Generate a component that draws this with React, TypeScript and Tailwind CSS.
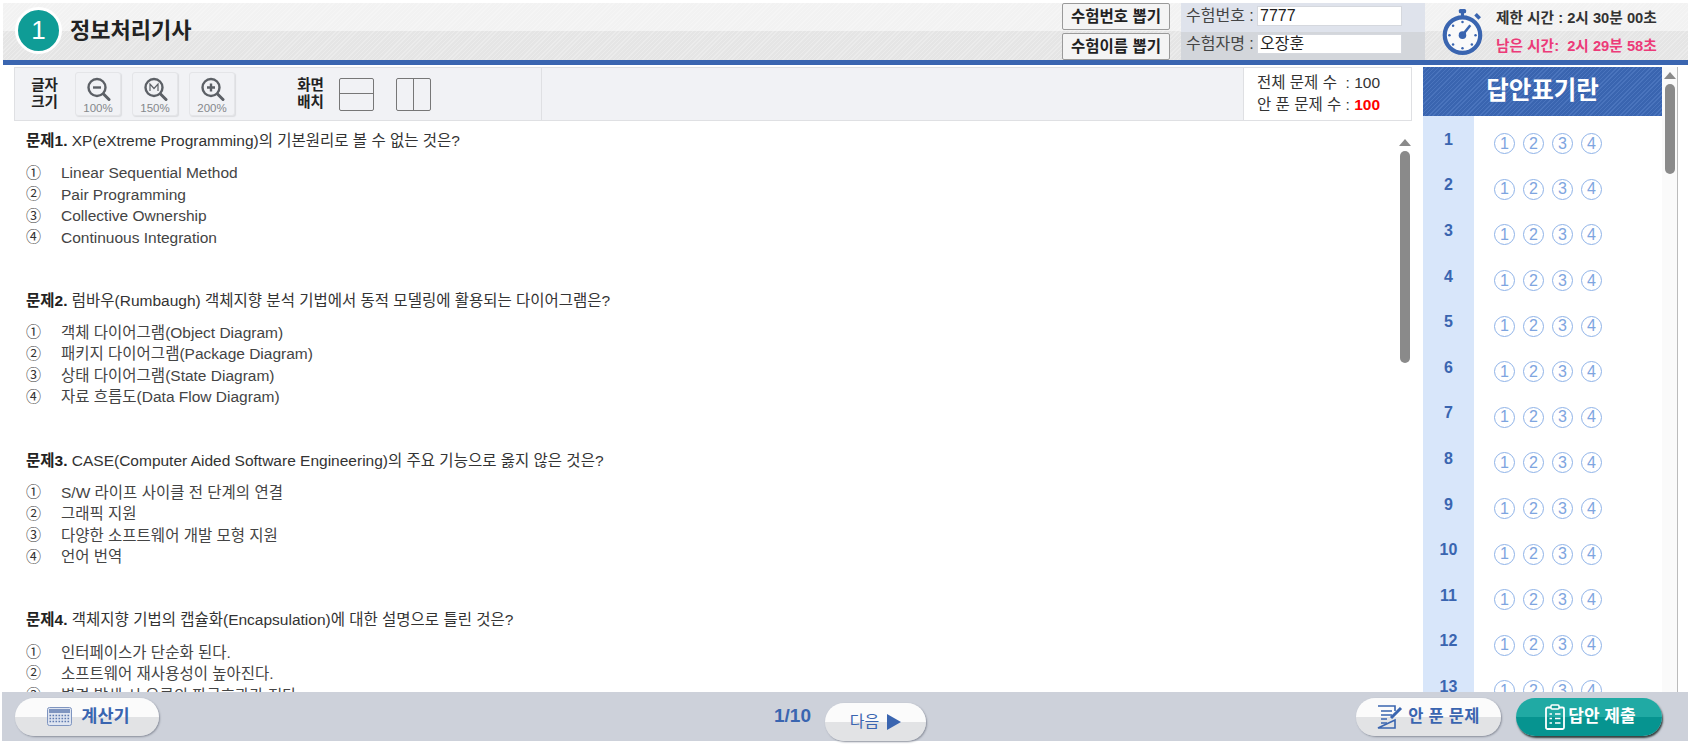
import type { ReactNode } from 'react'

const questions = [
  {
    no: 1,
    title: 'XP(eXtreme Programming)의 기본원리로 볼 수 없는 것은?',
    options: ['Linear Sequential Method', 'Pair Programming', 'Collective Ownership', 'Continuous Integration'],
  },
  {
    no: 2,
    title: '럼바우(Rumbaugh) 객체지향 분석 기법에서 동적 모델링에 활용되는 다이어그램은?',
    options: ['객체 다이어그램(Object Diagram)', '패키지 다이어그램(Package Diagram)', '상태 다이어그램(State Diagram)', '자료 흐름도(Data Flow Diagram)'],
  },
  {
    no: 3,
    title: 'CASE(Computer Aided Software Engineering)의 주요 기능으로 옳지 않은 것은?',
    options: ['S/W 라이프 사이클 전 단계의 연결', '그래픽 지원', '다양한 소프트웨어 개발 모형 지원', '언어 번역'],
  },
  {
    no: 4,
    title: '객체지향 기법의 캡슐화(Encapsulation)에 대한 설명으로 틀린 것은?',
    options: ['인터페이스가 단순화 된다.', '소프트웨어 재사용성이 높아진다.', '변경 발생 시 오류의 파급효과가 적다.'],
  },
]

const marks = ['①', '②', '③', '④']
const answerRows = Array.from({ length: 13 }, (_, i) => i + 1)

const pillBg = 'bg-[linear-gradient(#fbfbfb_0%,#fbfbfb_50%,#e2e3e5_50%,#e2e3e5_100%)]'

function ZoomIcon({ sign }: { sign: '-' | 'M' | '+' }) {
  return (
    <svg width="26" height="26" viewBox="0 0 26 26" fill="none" stroke="#5c6066">
      <circle cx="12" cy="11.5" r="8.5" strokeWidth="2.4" />
      <path d="M18.5 18 L24 23.5" strokeWidth="3" strokeLinecap="round" />
      {sign === '-' && <path d="M8 11.5 H16" strokeWidth="2.4" />}
      {sign === '+' && <path d="M8 11.5 H16 M12 7.5 V15.5" strokeWidth="2.4" />}
      {sign === 'M' && <path d="M8 15 V8 L12 12.5 L16 8 V15" strokeWidth="1.2" />}
    </svg>
  )
}

function ZoomButton({ sign, label }: { sign: '-' | 'M' | '+'; label: string }) {
  return (
    <div className="flex h-[44px] w-[46px] flex-col items-center rounded-[3px] border border-[#e4e5e8] bg-[#f1f2f5] pt-[3px] shadow-[1px_1px_1px_#dcdde0]">
      <ZoomIcon sign={sign} />
      <span className="text-[11.5px] leading-[13px] text-[#85888c]">{label}</span>
    </div>
  )
}

function PickButton({ children }: { children: ReactNode }) {
  return (
    <div className="flex h-[27px] w-[108px] items-center justify-center rounded-[2px] border border-[#9a9a9a] bg-[#f4f4f4] text-[15.5px] font-bold text-[#222]">
      {children}
    </div>
  )
}

function InfoRow({ label, value, bg }: { label: string; value: string; bg: string }) {
  return (
    <div className={`flex h-[30px] items-center pb-[3px] pl-[5px] ${bg}`}>
      <span className="w-[71px] text-[16px] whitespace-nowrap text-[#444]">{label}</span>
      <div className="flex h-[20px] w-[145px] items-center border border-[#d5d8de] bg-white pl-[2px] text-[16px] text-[#222]">
        {value}
      </div>
    </div>
  )
}

function StopWatch() {
  return (
    <svg width="44" height="48" viewBox="0 0 42 46" fill="none">
      <rect x="17" y="1" width="7" height="4" rx="1.5" fill="#3a65b0" />
      <rect x="19" y="4" width="3" height="4" fill="#3a65b0" />
      <path d="M33 6 L37 10" stroke="#3a65b0" strokeWidth="3.5" />
      <circle cx="20.5" cy="26" r="17" stroke="#3a65b0" strokeWidth="4" fill="#fafafa" />
      <circle cx="20.5" cy="26" r="3.6" fill="#3a65b0" />
      <path d="M20.5 26 L28 16.5" stroke="#3a65b0" strokeWidth="2.4" />
      <g fill="#3a65b0">
        <circle cx="20.5" cy="13.5" r="1.2" />
        <circle cx="20.5" cy="38.5" r="1.2" />
        <circle cx="8" cy="26" r="1.2" />
        <circle cx="33" cy="26" r="1.2" />
        <circle cx="11.5" cy="17" r="1.2" />
        <circle cx="11.5" cy="35" r="1.2" />
        <circle cx="29.5" cy="35" r="1.2" />
      </g>
    </svg>
  )
}

function CalcIcon() {
  return (
    <svg width="25" height="19" viewBox="0 0 25 19">
      <rect x="0.5" y="0.5" width="24" height="18" rx="2" fill="#dfe5f1" stroke="#7f95c0" />
      <rect x="2" y="2" width="21" height="4" fill="#7f95c0" />
      <g stroke="#5f7bb0" strokeWidth="1.6" strokeDasharray="1.6 1.4">
        <path d="M2.5 8.5 H23" />
        <path d="M2.5 11.5 H23" />
        <path d="M2.5 14.5 H23" />
      </g>
    </svg>
  )
}

function NoteIcon() {
  return (
    <svg width="26" height="25" viewBox="0 0 26 25" fill="none" stroke="#3a65b0">
      <path d="M1 2 H18 V7 M18 16 V24 H1 Z" strokeWidth="1.6" />
      <path d="M4 7 H15 M4 11 H15 M4 15 H10 M4 19 H10" strokeWidth="1.4" />
      <path d="M14 14 L24 4" strokeWidth="3" />
    </svg>
  )
}

function ClipboardIcon() {
  return (
    <svg width="20" height="26" viewBox="0 0 20 26" fill="none" stroke="#fff">
      <rect x="1" y="3.5" width="18" height="21.5" rx="1.5" strokeWidth="1.8" />
      <rect x="6" y="1" width="8" height="4" rx="1" strokeWidth="1.5" fill="#159d96" />
      <path d="M4.5 10 H7 M10 10 H15.5 M4.5 14.5 H7 M10 14.5 H15.5 M4.5 19 H7 M10 19 H15.5" strokeWidth="1.7" />
    </svg>
  )
}

export default function App() {
  return (
    <div className="flex h-[744px] w-[1688px] flex-col overflow-hidden bg-white pt-[3px] font-['Liberation_Sans','Noto_Sans_CJK_KR',sans-serif]">
      {/* Top header */}
      <header className="ml-[3px] flex h-[57px] shrink-0 bg-[repeating-linear-gradient(135deg,rgba(255,255,255,0.25)_0,rgba(255,255,255,0.25)_1px,transparent_1px,transparent_3px),linear-gradient(#f2f2f2_0%,#f2f2f2_50%,#e5e5e5_50%,#e5e5e5_100%)]">
        <div className="flex w-[1059px] items-center pb-[2px] pl-[12px]">
          <div className="flex h-[47px] w-[47px] items-center justify-center rounded-full border-[3px] border-white bg-[#0f9c96] text-[26px] text-white">
            1
          </div>
          <span className="ml-[8px] text-[22px] font-bold text-[#222]">정보처리기사</span>
        </div>
        <div className="flex w-[119px] flex-col gap-[3px]">
          <PickButton>수험번호 뽑기</PickButton>
          <PickButton>수험이름 뽑기</PickButton>
        </div>
        <div className="flex w-[244px] flex-col">
          <InfoRow label="수험번호 :" value="7777" bg="bg-[#dfe3ec]" />
          <InfoRow label="수험자명 :" value="오장훈" bg="bg-[#d3d6db]" />
        </div>
        <div className="flex flex-1 items-center pl-[16px]">
          <StopWatch />
          <div className="ml-[11px] flex flex-col gap-[12px] text-[14.7px] font-bold leading-[16px] whitespace-nowrap">
            <span className="text-[#333]">제한 시간 : 2시 30분 00초</span>
            <span className="text-[#ec3a78]">남은 시간:&nbsp; 2시 29분 58초</span>
          </div>
        </div>
      </header>
      <div className="ml-[3px] h-[5px] shrink-0 bg-[#3a65b0]" />

      <div className="flex min-h-0 flex-1 pt-[2px]">
        {/* Questions side */}
        <main className="flex w-[1423px] shrink-0 flex-col pl-[14px] pr-[11px]">
          <div className="flex h-[54px] shrink-0 border border-[#dfe0e3] bg-[#f1f2f5]">
            <div className="flex w-[527px] items-center border-r border-[#dfe0e3] pl-[15px]">
              <div className="w-[29px] shrink-0 text-center text-[14.5px] font-bold leading-[17px] text-[#222]">
                글자
                <br />
                크기
              </div>
              <div className="ml-[16px] flex gap-[11px]">
                <ZoomButton sign="-" label="100%" />
                <ZoomButton sign="M" label="150%" />
                <ZoomButton sign="+" label="200%" />
              </div>
              <div className="ml-[61px] w-[29px] shrink-0 text-center text-[14.5px] font-bold leading-[17px] text-[#222]">
                화면
                <br />
                배치
              </div>
              <div className="ml-[14px] flex h-[33px] w-[35px] flex-col rounded-[2px] border border-[#777]">
                <div className="h-1/2 border-b border-[#777]" />
              </div>
              <div className="ml-[22px] flex h-[33px] w-[35px] rounded-[2px] border border-[#777]">
                <div className="w-1/2 border-r border-[#777]" />
              </div>
            </div>
            <div className="flex-1" />
            <div className="flex w-[168px] flex-col justify-center gap-[4px] border-l border-[#dfe0e3] bg-white pb-[1px] pl-[13px] text-[15.5px] leading-[18px] text-[#333]">
              <span>전체 문제 수&nbsp; : 100</span>
              <span>
                안 푼 문제 수 : <b className="text-[#f00]">100</b>
              </span>
            </div>
          </div>

          <div className="flex min-h-0 flex-1">
            <div className="min-w-0 flex-1 overflow-hidden pl-[12px] pt-[10px]">
              {questions.map(q => (
                <section key={q.no} className="h-[159.8px]">
                  <p className="text-[15.5px] leading-[20px] text-[#333]">
                    <b className="text-[#222]">문제{q.no}.</b> {q.title}
                  </p>
                  <ul className="mt-[11px]">
                    {q.options.map((opt, i) => (
                      <li key={opt} className="flex h-[21.5px] items-center text-[15.5px] text-[#444]">
                        <span className="w-[35px] text-[15px] text-[#333]">{marks[i]}</span>
                        {opt}
                      </li>
                    ))}
                  </ul>
                </section>
              ))}
            </div>
            {/* Question scrollbar */}
            <div className="mr-[2px] flex w-[10px] shrink-0 flex-col items-center pt-[18px]">
              <div className="h-0 w-0 border-x-[6px] border-b-[7px] border-x-transparent border-b-[#8a8a8a]" />
              <div className="mt-[5px] h-[212px] w-[10px] rounded-full bg-[#8a8a8a]" />
            </div>
          </div>
        </main>

        {/* Answer sheet */}
        <aside className="flex w-[239px] shrink-0 flex-col overflow-hidden">
          <div className="flex h-[49px] shrink-0 items-center justify-center bg-[repeating-linear-gradient(135deg,#3a65b0_0,#3a65b0_2px,#4a74bd_2px,#4a74bd_3px)] text-[24.5px] font-bold text-white">
            답안표기란
          </div>
          <div className="min-h-0 flex-1 bg-[linear-gradient(90deg,#d8e6fa_0,#d8e6fa_51px,#fff_51px)] pt-[1px]">
            {answerRows.map(n => (
              <div key={n} className="flex h-[45.6px] items-center">
                <span className="w-[51px] text-center text-[16px] font-bold text-[#3a65b0]">{n}</span>
                <div className="ml-[20px] mt-[8px] flex gap-[8px]">
                  {marks.map((m, i) => (
                    <span
                      key={m}
                      className="flex h-[21px] w-[21px] items-center justify-center rounded-full border-[1.5px] border-[#8fb3e8] text-[16px] leading-none text-[#7ea5e0]"
                    >
                      {i + 1}
                    </span>
                  ))}
                </div>
              </div>
            ))}
          </div>
        </aside>

        {/* Answer scrollbar */}
        <div className="mr-[10px] flex flex-1 flex-col items-center border-r border-[#bbb] bg-[#fafafa] pt-[5px]">
          <div className="h-0 w-0 border-x-[6px] border-b-[7px] border-x-transparent border-b-[#8a8a8a]" />
          <div className="mt-[5px] h-[90px] w-[10px] rounded-full bg-[#8a8a8a]" />
        </div>
      </div>

      {/* Bottom bar */}
      <footer className="mb-[3px] ml-[2px] flex h-[49px] shrink-0 items-center bg-[#cdd1da] pl-[13px] pr-[26px]">
        <div className={`flex h-[38px] w-[144px] items-center justify-center gap-[9px] rounded-full pl-[3px] shadow-[1px_1px_2px_#8a8f9b] ${pillBg}`}>
          <CalcIcon />
          <span className="text-[17.5px] font-bold text-[#3a65b0]">계산기</span>
        </div>
        <span className="ml-[615px] text-[19px] font-bold text-[#3a65b0]">1/10</span>
        <div className={`ml-[14px] mt-[10px] flex h-[38px] w-[101px] items-center justify-center gap-[8px] rounded-full shadow-[1px_1px_2px_#8a8f9b] ${pillBg}`}>
          <span className="text-[16px] text-[#3a65b0]">다음</span>
          <span className="h-0 w-0 border-y-[8px] border-l-[14px] border-y-transparent border-l-[#3a65b0]" />
        </div>
        <div className={`ml-auto flex h-[38px] w-[145px] items-center justify-center gap-[5px] rounded-full shadow-[1px_1px_2px_#8a8f9b] ${pillBg}`}>
          <NoteIcon />
          <span className="text-[16.5px] font-bold tracking-[0.3px] text-[#3a65b0]">안 푼 문제</span>
        </div>
        <div className="ml-[15px] flex h-[38px] w-[146px] items-center justify-center gap-[3px] rounded-full bg-[linear-gradient(#20aaa4_0%,#20aaa4_50%,#069490_50%,#069490_100%)] pl-[3px] shadow-[1px_2px_2px_#33403f]">
          <ClipboardIcon />
          <span className="text-[17px] font-bold text-white">답안 제출</span>
        </div>
      </footer>
    </div>
  )
}
